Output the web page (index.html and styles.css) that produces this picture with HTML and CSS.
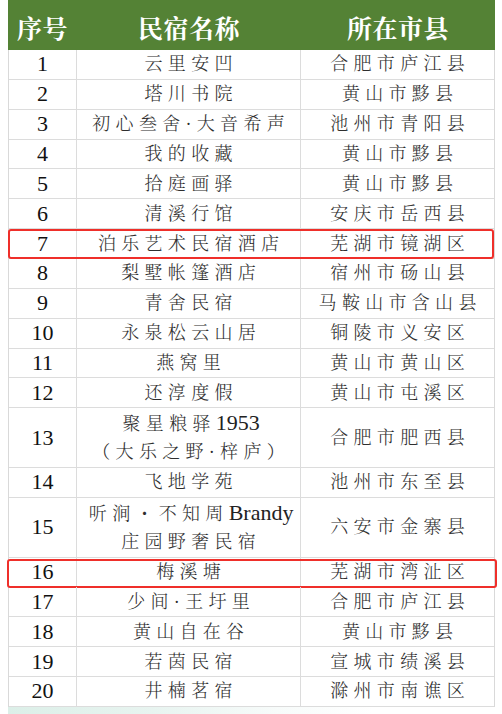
FILE: index.html
```html
<!DOCTYPE html>
<html lang="zh-CN">
<head>
<meta charset="utf-8">
<title>民宿名单</title>
<link rel="stylesheet" href="styles.css">
</head>
<body>
<div class="page">
  <div class="sheet">
    <div class="row head"><div class="c">序号</div><div class="c">民宿名称</div><div class="c">所在市县</div></div>
    <div class="row"><div class="c n">1</div><div class="c t">云里安凹</div><div class="c t">合肥市庐江县</div></div>
    <div class="row"><div class="c n">2</div><div class="c t">塔川书院</div><div class="c t">黄山市黟县</div></div>
    <div class="row"><div class="c n">3</div><div class="c t">初心叁舍·大音希声</div><div class="c t">池州市青阳县</div></div>
    <div class="row"><div class="c n">4</div><div class="c t">我的收藏</div><div class="c t">黄山市黟县</div></div>
    <div class="row"><div class="c n">5</div><div class="c t">拾庭画驿</div><div class="c t">黄山市黟县</div></div>
    <div class="row"><div class="c n">6</div><div class="c t">清溪行馆</div><div class="c t">安庆市岳西县</div></div>
    <div class="row hl"><div class="c n">7</div><div class="c t">泊乐艺术民宿酒店</div><div class="c t">芜湖市镜湖区</div></div>
    <div class="row"><div class="c n">8</div><div class="c t">梨墅帐篷酒店</div><div class="c t">宿州市砀山县</div></div>
    <div class="row"><div class="c n">9</div><div class="c t">青舍民宿</div><div class="c t">马鞍山市含山县</div></div>
    <div class="row"><div class="c n">10</div><div class="c t">永泉松云山居</div><div class="c t">铜陵市义安区</div></div>
    <div class="row"><div class="c n">11</div><div class="c t">燕窝里</div><div class="c t">黄山市黄山区</div></div>
    <div class="row"><div class="c n">12</div><div class="c t">还淳度假</div><div class="c t">黄山市屯溪区</div></div>
    <div class="row tall"><div class="c n">13</div><div class="c t"><span>聚星粮驿<span class="lat">1953</span></span><span>（大乐之野·梓庐）</span></div><div class="c t">合肥市肥西县</div></div>
    <div class="row"><div class="c n">14</div><div class="c t">飞地学苑</div><div class="c t">池州市东至县</div></div>
    <div class="row tall"><div class="c n">15</div><div class="c t"><span>听涧・不知周<span class="lat">Brandy</span></span><span>庄园野奢民宿</span></div><div class="c t">六安市金寨县</div></div>
    <div class="row hl wide"><div class="c n">16</div><div class="c t">梅溪塘</div><div class="c t">芜湖市湾沚区</div></div>
    <div class="row"><div class="c n">17</div><div class="c t">少间·王圩里</div><div class="c t">合肥市庐江县</div></div>
    <div class="row"><div class="c n">18</div><div class="c t">黄山自在谷</div><div class="c t">黄山市黟县</div></div>
    <div class="row"><div class="c n">19</div><div class="c t">若茵民宿</div><div class="c t">宣城市绩溪县</div></div>
    <div class="row"><div class="c n">20</div><div class="c t">井楠茗宿</div><div class="c t">滁州市南谯区</div></div>
  </div>
  <div class="strip"></div>
</div>
</body>
</html>
```
FILE: styles.css
```css
* { box-sizing: border-box; }
html, body { margin: 0; padding: 0; background: #ffffff; }
body {
  font-family: "Liberation Serif", "Noto Serif CJK SC", "Noto Sans CJK SC", serif;
  width: 502px;
  height: 714px;
  overflow: hidden;
}
.page { padding-left: 8px; }
.sheet {
  width: 487px;
  border-left: 1px solid #d9d9d9;
  border-right: 1px solid #d9d9d9;
}
.row {
  display: grid;
  grid-template-columns: 68px 224px 193px;
  height: 29.86px;
  border-bottom: 1px solid #dcdcdc;
  position: relative;
}
.row.tall { height: 59.72px; }
.c {
  display: flex;
  align-items: center;
  justify-content: center;
  text-align: center;
  border-right: 1px solid #dcdcdc;
  white-space: nowrap;
}
.c:last-child { border-right: none; }
.head {
  height: 50px;
  background: #548235;
  border-bottom: none;
  margin-left: -1px;
  margin-right: -1px;
  grid-template-columns: 69px 224px 194px;
}
.head .c {
  border-right: none;
  color: #ffffff;
  font-weight: bold;
  font-size: 25px;
  padding-top: 3px;
  letter-spacing: 0.5px;
}
.n {
  font-size: 22px;
  color: #111111;
}
.t {
  font-size: 18px;
  font-weight: 300;
  color: #2e2e2e;
  letter-spacing: 5.3px;
  padding-left: 5.3px;
  line-height: 28px;
}
.row.tall .t { flex-direction: column; }
.lat {
  font-size: 22px;
  font-weight: normal;
  letter-spacing: 0;
  color: #222222;
}
.hl::after {
  content: "";
  position: absolute;
  left: -1px;
  right: 0px;
  top: 0px;
  bottom: -1px;
  border: 2px solid #ef2f2a;
  border-radius: 3px;
  pointer-events: none;
}
.hl.wide::after {
  left: -2px;
  right: -3px;
  top: 1px;
  bottom: -2px;
}
.strip {
  width: 487px;
  height: 8px;
  background: linear-gradient(90deg, #dcefe8 0%, #e8f4f0 30%, #f7fbfa 55%, #ffffff 75%);
}
```
